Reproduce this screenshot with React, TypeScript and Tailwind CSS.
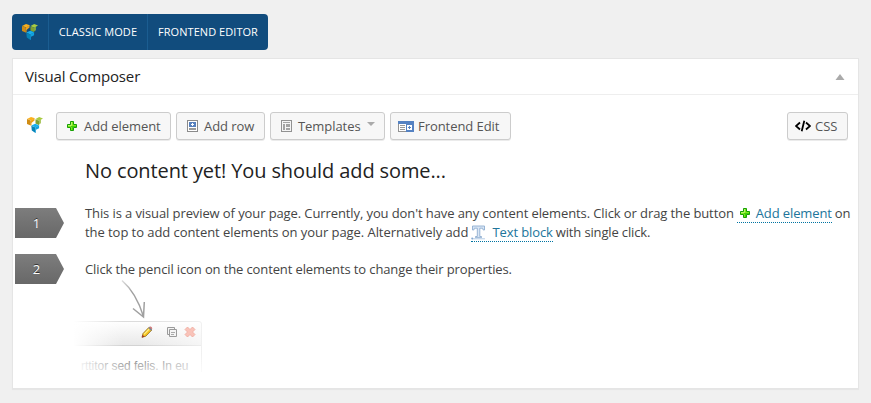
import React from "react";

function Logo() {
  return (
    <svg width="16" height="16" viewBox="0 0 16 16" className="block shrink-0">
      <path d="M0 2 4 0l4 1.2L4.5 3.500Z" fill="#fbb01c" />
      <path d="M0 2 3.800 3.600v5L0 7Z" fill="#d08c14" />
      <path d="m3.800 3.600 3.700-2v2L4.500 6v2.500l-.7.300Z" fill="#f0a41b" />
      <path d="m8.500 2 3.700-2L16 1.500l-3.800 2.200Z" fill="#a9cb41" />
      <path d="m8.500 2.200 3.700 1.500v4.500L8.500 6.500Z" fill="#7f9f32" />
      <path d="m12.200 3.500 1.600-.8v3.600l-1.600 1Z" fill="#97b93a" />
      <path d="m4.300 8.600 3.900-1.900 3.900 1.500-3.700 2.400Z" fill="#17b0ee" />
      <path d="m4.300 8.700 4.200 1.700V16l-3.700-2.600Z" fill="#0684b8" />
      <path d="m8.400 10.300 3.700-2v2.900L9 12.700v2.800l-.6.500Z" fill="#12a2e0" />
    </svg>
  );
}

function Plus() {
  return (
    <svg width="10" height="10" viewBox="0 0 10 10" className="block shrink-0">
      <path d="M3.5.5h3v3h3v3h-3v3h-3v-3h-3v-3h3Z" fill="#7fe81a" stroke="#17a006" />
      <path d="M4 5.500h5M5.500 5v4" stroke="#3fcf0c" fill="none" />
      <path d="M4.500 1v3.500H1" stroke="#b6f56a" fill="none" />
    </svg>
  );
}

function RowIcon() {
  return (
    <svg width="11" height="12" viewBox="0 0 11 12" className="block shrink-0" shapeRendering="crispEdges">
      <rect x=".5" y=".5" width="10" height="11" fill="#fff" stroke="#8b8b8b" />
      <path d="M2 2h7v5H2Z" fill="#5780bd" />
      <path d="M5 3h1v1h1v1H6v1H5V5H4V4h1Z" fill="#fff" />
      <path d="M2 8h7v2H2Z" fill="#999" />
    </svg>
  );
}

function TemplateIcon() {
  return (
    <svg width="11" height="12" viewBox="0 0 11 12" className="block shrink-0" shapeRendering="crispEdges">
      <rect x=".5" y=".5" width="10" height="11" fill="#f5f5f5" stroke="#929292" />
      <path d="M2 2h7v1H2ZM2 4h2v6H2ZM5 4h4v3H5ZM5 8h4v2H5Z" fill="#a3a3a3" />
    </svg>
  );
}

function FrontendIcon() {
  return (
    <svg width="16" height="11" viewBox="0 0 16 11" className="block shrink-0" shapeRendering="crispEdges">
      <rect x=".5" y=".5" width="15" height="10" fill="#fff" stroke="#929292" />
      <path d="M0 0h16v3H0ZM8 3h8v8H8Z" fill="#5582c2" />
      <path d="M2 4h5v1H2ZM2 6h5v1H2ZM2 8h5v1H2Z" fill="#999" />
      <path d="M9 4h5v5H9Z" fill="#fff" />
      <path d="M11 5h1v1h1v1h-1v1h-1V7h-1V6h1Z" fill="#5582c2" />
    </svg>
  );
}

function TextIcon() {
  return (
    <svg width="15" height="15" viewBox="0 0 15 15" className="block shrink-0">
      <path d="M1.500 1h12v4h-1.300l-.6-1.800H8.800v8.300h1.700v1.200h-6v-1.200h1.800V3.200H3.400L2.800 5H1.500Z" fill="#d9e6f5" stroke="#8faed0" strokeWidth=".9" />
      <path d="M1 13.800h13" stroke="#b5cce5" />
      <circle cx="1.200" cy="13.600" r="1" fill="#86a8d0" />
    </svg>
  );
}

function Button({ className, children }: { className: string; children: React.ReactNode }) {
  return (
    <button
      className={
        "flex h-7 shrink-0 items-center whitespace-nowrap rounded-[3px] border border-[#ccc] bg-[#f7f7f7] text-[13px] leading-[26px] tracking-[-0.06px] text-[#555] shadow-[0_1px_0_rgba(0,0,0,0.08)] " +
        className
      }
    >
      {children}
    </button>
  );
}

function Step({ n }: { n: number }) {
  return (
    <div className="h-[30px] w-[49px] shrink-0 bg-linear-to-b from-[#7d7d7d] to-[#686868] pr-1.5 text-center text-[13px] leading-[30px] text-white [clip-path:polygon(0_0,41px_0,100%_50%,41px_100%,0_100%)] [text-shadow:0_-1px_0_#333]">
      {n}
    </div>
  );
}

function EditPreview() {
  return (
    <svg width="140" height="102" viewBox="70 277 140 102" className="block" fontFamily="'Liberation Sans', Arial, sans-serif">
      <defs>
        <linearGradient id="bar" x2="0" y2="1">
          <stop stopColor="#fefefe" />
          <stop offset="1" stopColor="#e9e9e9" />
        </linearGradient>
        <linearGradient id="fadeX">
          <stop stopColor="#fff" />
          <stop offset="1" stopColor="#fff" stopOpacity="0" />
        </linearGradient>
        <linearGradient id="fadeRight">
          <stop stopColor="#fff" stopOpacity="0" />
          <stop offset="1" stopColor="#fff" stopOpacity=".6" />
        </linearGradient>
        <linearGradient id="fadeY" x2="0" y2="1">
          <stop stopColor="#fff" stopOpacity="0" />
          <stop offset="1" stopColor="#fff" />
        </linearGradient>
        <linearGradient id="arrow" x2="0" y2="1">
          <stop stopColor="#ddd" />
          <stop offset=".3" stopColor="#a0a0a0" />
        </linearGradient>
      </defs>
      <path d="M122 280.500C133 290 139 302 143.500 316.500M133 308.500l10.500 8.500.8-15" fill="none" stroke="url(#arrow)" strokeWidth="1.500" />
      <path d="M74 322h125q2 0 2 2v21H74Z" fill="url(#bar)" />
      <path d="M74 321.500h125q2.500 0 2.500 2.500v50" fill="none" stroke="#dcdcdc" />
      <path d="M74 345.500h127" stroke="#d3d3d3" />
      <text x="81" y="370" fontSize="12" fill="#6c6c6c" textLength="107.500">rttitor sed felis. In eu</text>
      <rect x="73" y="319" width="50" height="59" fill="url(#fadeX)" />
      <rect x="140" y="319" width="63" height="59" fill="url(#fadeRight)" />
      <rect x="73" y="354" width="130" height="26" fill="url(#fadeY)" />
      <rect x="73" y="372" width="130" height="6" fill="#fff" />
      <g>
        <path d="m142 337.300 1-3.800 6-6.200 2.800 2.700-6 6.200Z" fill="#f7c522" stroke="#8d6a1c" strokeWidth=".8" />
        <path d="m144 334.300 5.200-5.300" stroke="#fff08a" strokeWidth="1.100" />
        <path d="m148.300 328 1.100-1.100 2.700 2.700-1.100 1.100Z" fill="#7d8696" />
        <path d="m149.800 326.600q1.700-.6 2.500 1.700l-.6.900-2.300-2.200Z" fill="#cf6f70" />
        <path d="m141.800 337.500.7-2.800 2.100 2.100Z" fill="#a3352a" />
      </g>
      <g fill="#f4f4f4" stroke="#9a9a9a">
        <path d="M167.500 327.500h7v7h-7Z" />
        <path d="M169.500 329.500h7v7h-7Z" />
        <path d="M171 332.500h4M171 334.500h3" stroke="#aaa" />
      </g>
      <path d="m187.500 327 2.500 2.500 2.500-2.500 2.500 2.500-2.500 2.500 2.500 2.500-2.500 2.500-2.500-2.500-2.500 2.500-2.500-2.500 2.500-2.500-2.500-2.500Z" fill="#f9c3b9" stroke="#eda79b" strokeWidth=".8" />
    </svg>
  );
}

export default function App() {
  return (
    <div className="h-[403px] w-[871px] overflow-hidden bg-[#f0f0f0] px-3 pt-3.5 font-['Open_Sans',sans-serif] text-[13px] text-[#444]">
      <nav className="flex h-9 w-64 items-stretch overflow-hidden rounded-[4px] bg-[#114c7d] text-[11px] leading-9 whitespace-nowrap text-white">
        <div className="flex w-[37px] items-center justify-center border-r border-[#1b5d91]">
          <Logo />
        </div>
        <a className="w-[99px] border-r border-[#1b5d91] text-center tracking-[0.1px]">CLASSIC MODE</a>
        <a className="w-[120px] text-center tracking-[0.05px]">FRONTEND EDITOR</a>
      </nav>

      <section className="mt-2 h-[331px] w-[847px] border border-[#e5e5e5] bg-white shadow-[0_1px_1px_rgba(0,0,0,0.04)]">
        <header className="flex h-9 items-center justify-between border-b border-[#eee] pr-[13px] pl-3">
          <h2 className="pb-0.5 text-[15px] leading-5 tracking-[-0.15px] text-[#222]">Visual Composer</h2>
          <svg width="10" height="6" viewBox="0 0 10 6">
            <path d="m5 0 4.500 6H.5Z" fill="#aaa" />
          </svg>
        </header>

        <div className="mt-[17px] flex h-7 pr-2.5 pl-3.5">
          <div className="w-[29px] pt-[5px]">
            <Logo />
          </div>
          <div className="flex gap-[5px]">
            <Button className="w-[115px] gap-[7px] pl-2.5">
              <Plus />
              <span>Add element</span>
            </Button>
            <Button className="w-[89px] gap-1.5 pl-2.5">
              <RowIcon />
              <span>Add row</span>
            </Button>
            <Button className="w-[115px] gap-1.5 pl-2.5">
              <TemplateIcon />
              <span>Templates</span>
              <svg width="8" height="4" viewBox="0 0 8 4" className="-mt-1">
                <path d="M0 0h8L4 4Z" fill="#aaa" />
              </svg>
            </Button>
            <Button className="w-[121px] gap-1 pl-[7px]">
              <FrontendIcon />
              <span>Frontend Edit</span>
            </Button>
          </div>
          <Button className="ml-auto w-[61px] gap-1 pl-[7px]">
            <svg width="16" height="12" viewBox="0 0 16 12" fill="none" stroke="#000" strokeWidth="1.800">
              <path d="M5 2.500 1 6l4 3.500M11 2.500 15 6l-4 3.500M9.300.8 6.700 11.200" />
            </svg>
            <span>CSS</span>
          </Button>
        </div>

        <h1 className="mt-4 ml-[72px] text-[20px] leading-[30px] tracking-[-0.11px] text-[#222]">
          No content yet! You should add some...
        </h1>

        <div className="mt-[17px] flex h-[43px] pl-0.5">
          <div className="mt-[5px]">
            <Step n={1} />
          </div>
          <div className="mt-px ml-[21px] leading-[19px] whitespace-nowrap">
            <div className="flex h-[19px]">
              <span className="tracking-[-0.1px]">
                This is a visual preview of your page. Currently, you don't have any content elements. Click or drag the button
              </span>
              <a className="ml-[3px] flex h-[19px] items-center gap-1.5 border-b border-dotted border-[#0074a2] pl-[3px] text-[#21759b]">
                <Plus />
                <span className="tracking-[-0.12px]">Add element</span>
              </a>
              <span className="ml-[3px]">on</span>
            </div>
            <div className="flex h-[19px]">
              <span className="tracking-[-0.06px]">the top to add content elements on your page. Alternatively add</span>
              <a className="ml-[3px] flex h-[19px] items-center gap-1.5 border-b border-dotted border-[#0074a2] text-[#21759b]">
                <TextIcon />
                <span className="tracking-[-0.1px]">Text block</span>
              </a>
              <span className="ml-[3px] tracking-[-0.15px]">with single click.</span>
            </div>
          </div>
        </div>

        <div className="mt-2 flex h-[30px] pl-0.5">
          <Step n={2} />
          <p className="ml-[21px] leading-[30px] tracking-[-0.12px]">
            Click the pencil icon on the content elements to change their properties.
          </p>
        </div>
        <div className="-mt-[7px] ml-[57px]">
          <EditPreview />
        </div>
      </section>
    </div>
  );
}
